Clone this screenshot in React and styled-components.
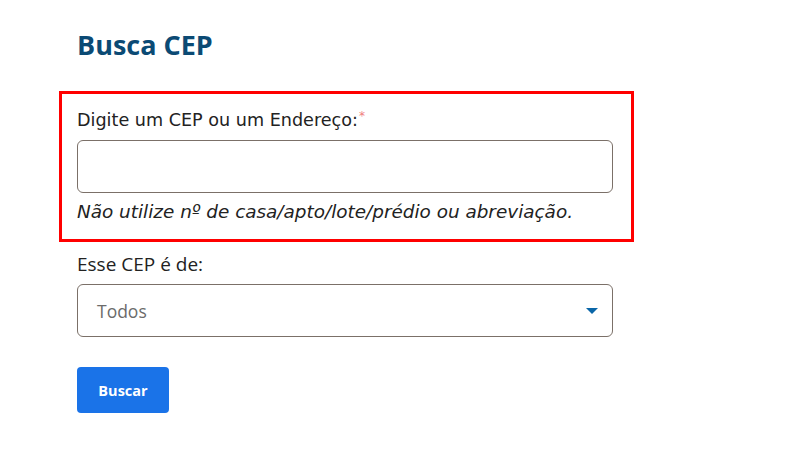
import React from 'react';
import styled, { createGlobalStyle } from 'styled-components';

const GlobalStyle = createGlobalStyle`
  html, body {
    margin: 0;
    padding: 0;
    background: #ffffff;
  }
`;

const Page = styled.div`
  width: 575px;
  margin-left: 59px;
  padding-top: 27px;
  display: flex;
  flex-direction: column;
`;

const Title = styled.h1`
  margin: 0 0 28px 18px;
  font-family: "Open Sans", sans-serif;
  font-weight: 700;
  font-size: 27px;
  line-height: 36px;
  color: #0b4a74;
`;

const Highlight = styled.div`
  border: 3px solid #ff0000;
  padding: 13px 18px 14px 15px;
  display: flex;
  flex-direction: column;
`;

const Field = styled.div`
  padding-left: ${p => p.$indent || 0}px;
  padding-right: ${p => p.$indent ? 21 : 0}px;
  margin-top: ${p => p.$top || 0}px;
  display: flex;
  flex-direction: column;
`;

const Label = styled.label`
  font-family: ${p => p.$alt ? '"Open Sans", sans-serif' : '"DejaVu Sans", sans-serif'};
  font-size: ${p => p.$alt ? 19 : 17.6}px;
  line-height: 26px;
  color: #222222;
  margin-bottom: 7px;
`;

const Required = styled.sup`
  color: #f07e7e;
  font-size: 12px;
  vertical-align: top;
  position: relative;
  top: -4px;
  margin-left: 1px;
`;

const TextInput = styled.input`
  box-sizing: border-box;
  width: 100%;
  height: 53px;
  border: 1px solid #7b7068;
  border-radius: 6px;
  background: #fff;
  outline: none;
`;

const Hint = styled.p`
  margin: 6px 0 0;
  font-family: "DejaVu Sans", sans-serif;
  font-style: italic;
  font-size: 18.4px;
  line-height: 26px;
  color: #222222;
`;

const SelectBox = styled.div`
  box-sizing: border-box;
  height: 53px;
  border: 1px solid #7b7068;
  border-radius: 6px;
  display: flex;
  align-items: center;
  justify-content: space-between;
  padding: 0 14px 0 19px;
  font-family: "Open Sans", sans-serif;
  font-size: 17.5px;
  color: #6b6b6b;
`;

const Caret = styled.span`
  width: 0;
  height: 0;
  border-left: 6px solid transparent;
  border-right: 6px solid transparent;
  border-top: 6px solid #0a66a8;
`;

const Button = styled.button`
  align-self: flex-start;
  width: 92px;
  height: 46px;
  border: none;
  border-radius: 4px;
  background: #1a73e8;
  color: #ffffff;
  font-family: "Open Sans", sans-serif;
  font-weight: 700;
  font-size: 14.5px;
`;

export default function App() {
  return (
    <>
      <GlobalStyle />
      <Page>
        <Title>Busca CEP</Title>
        <Highlight>
          <Label>
            Digite um CEP ou um Endereço:<Required>*</Required>
          </Label>
          <TextInput type="text" />
          <Hint>Não utilize nº de casa/apto/lote/prédio ou abreviação.</Hint>
        </Highlight>
        <Field $indent={18} $top={9}>
          <Label $alt>Esse CEP é de:</Label>
          <SelectBox>
            Todos
            <Caret />
          </SelectBox>
        </Field>
        <Field $indent={18} $top={30}>
          <Button>Buscar</Button>
        </Field>
      </Page>
    </>
  );
}
